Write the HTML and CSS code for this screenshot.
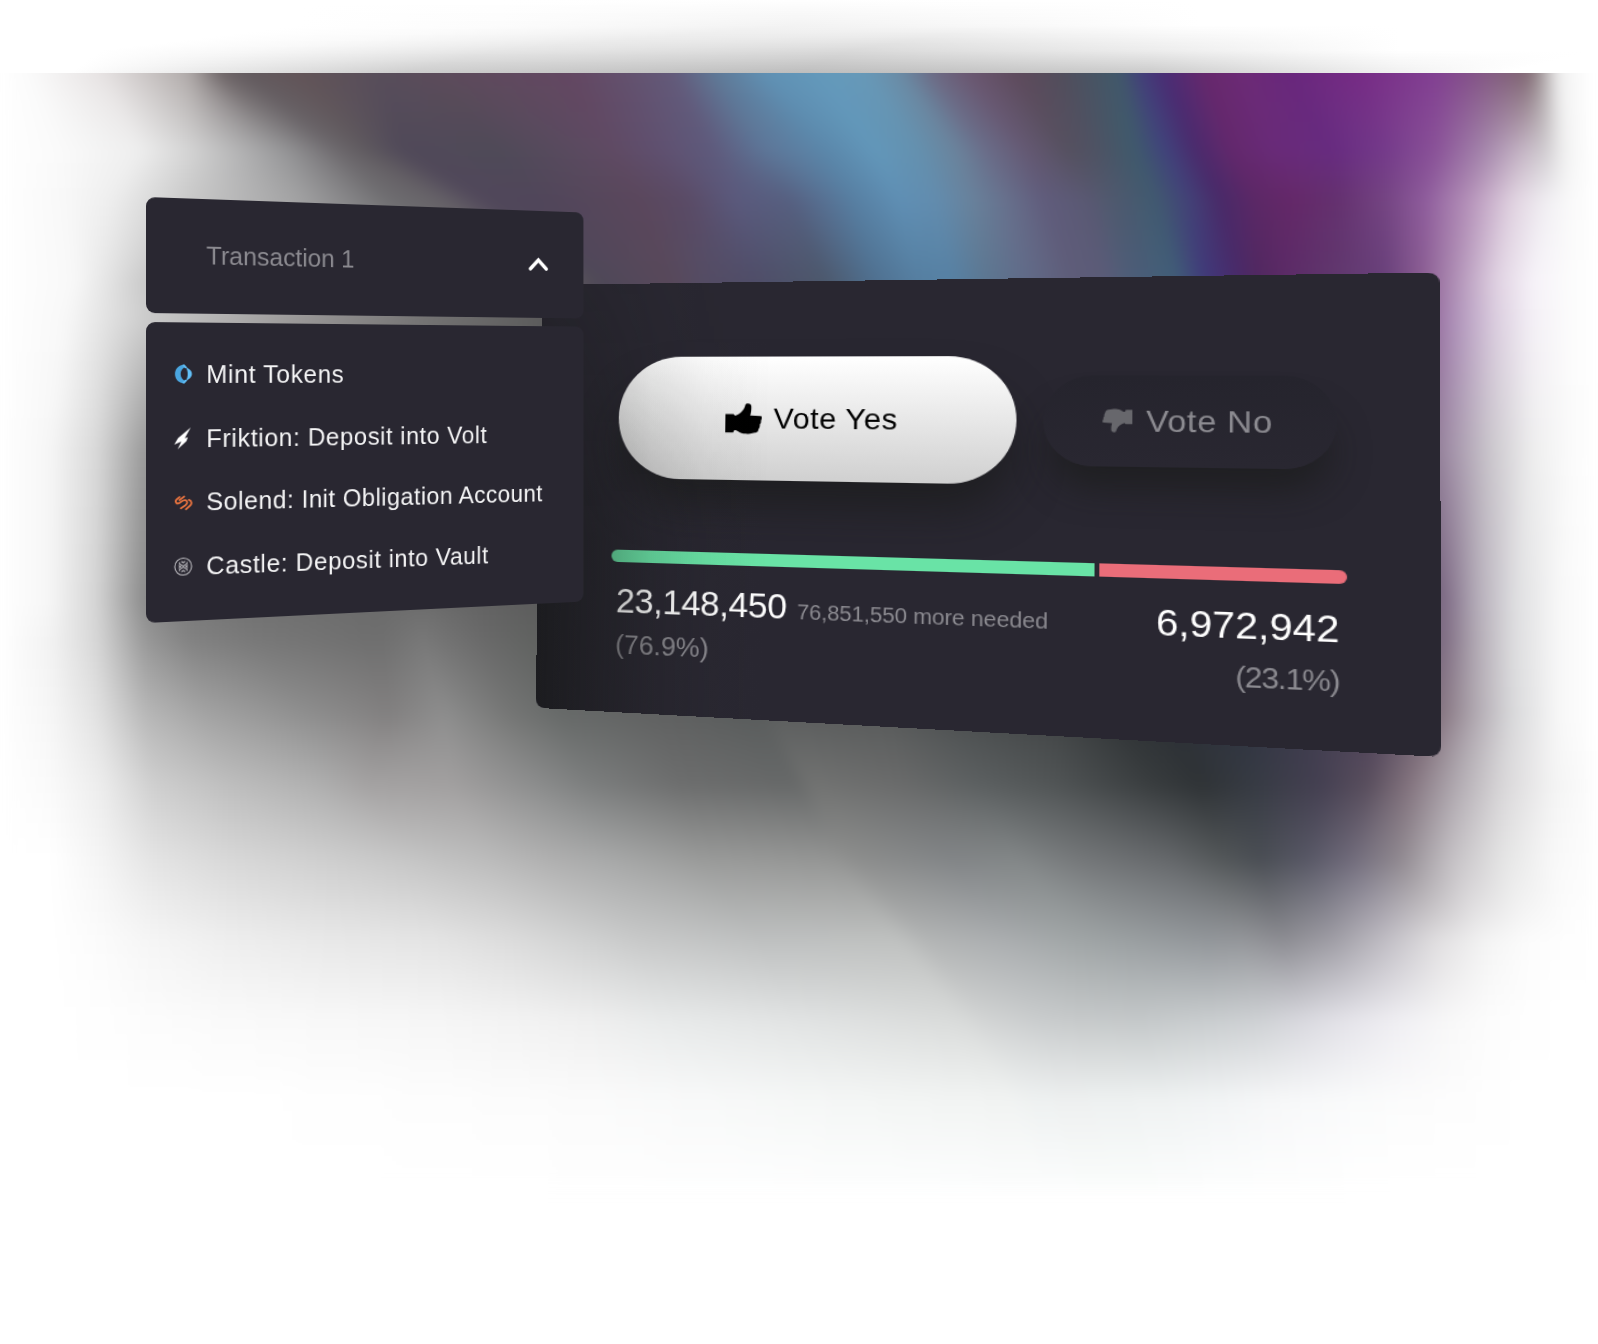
FILE: index.html
```html
<!DOCTYPE html>
<html lang="en">
<head>
<meta charset="utf-8">
<title>Proposal vote</title>
<link rel="stylesheet" href="styles.css">
</head>
<body>
<main class="scene">
  <div class="halo"><canvas id="halo" width="1598" height="73"></canvas></div>
  <div class="glow"><canvas id="glow" width="1598" height="1311"></canvas></div>

  <section class="vote-card">
    <div class="buttons">
      <button class="vote vote-yes">
        <svg class="thumb" viewBox="0 0 110 95"><path d="M0 33H24L29 38C41 34 56 22 59 6C60-2 75-2 77 8C78 20 76 30 74 37L104 39C111 39 111 47 107 50L106 60L103 64C104 74 100 76 99 80C98 88 94 89 88 90C70 95 50 95 38 86C34 83 29 81 26 84L24 90H0Z"/></svg>
        <span>Vote Yes</span>
      </button>
      <button class="vote vote-no">
        <svg class="thumb" viewBox="0 0 110 95"><path d="M0 33H24L29 38C41 34 56 22 59 6C60-2 75-2 77 8C78 20 76 30 74 37L104 39C111 39 111 47 107 50L106 60L103 64C104 74 100 76 99 80C98 88 94 89 88 90C70 95 50 95 38 86C34 83 29 81 26 84L24 90H0Z"/></svg>
        <span>Vote No</span>
      </button>
    </div>
    <div class="bar">
      <div class="bar-yes"></div>
      <div class="bar-no"></div>
    </div>
    <div class="totals">
      <div class="total">
        <div class="count"><span class="num num-yes">23,148,450</span><span class="needed">76,851,550 more needed</span></div>
        <div class="share">(76.9%)</div>
      </div>
      <div class="total total-no">
        <div class="count"><span class="num">6,972,942</span></div>
        <div class="share share-no">(23.1%)</div>
      </div>
    </div>
  </section>

  <section class="tx-panel">
    <header class="tx-head">
      <span class="tx-title">Transaction 1</span>
      <svg class="chevron" viewBox="0 0 23 15"><path d="M2.2 12.8 11.5 3.4 20.8 12.8"/></svg>
    </header>
    <ul class="tx-list">
      <li>
        <svg class="icon" viewBox="0 0 20 22">
          <path fill="#4aa6e0" d="M8.500 1.500C4 2.500 1.200 6.500 1.200 11S4 19.500 8.500 20.500L11 21 12.600 18.600C9 17 7.200 14.500 7.200 11S9 5 12.600 3.400L11 1Z"/>
          <path fill="#62c0f8" d="M13 4.500C16.500 5 19.300 8 19.300 11S16.500 17 13 17.500C14.300 15.500 14.800 13.300 14.800 11S14.300 6.500 13 4.500Z"/>
          <path fill="#62c0f8" d="M9 1.300 11.300 1 14.500 4.500 12 5Z M9 20.700 11.300 21 14.500 17.500 12 17Z"/>
        </svg>
        <span>Mint Tokens</span>
      </li>
      <li>
        <svg class="icon icon-tall" viewBox="0 0 20 24"><path fill="#fff" d="M18 .5 4.500 11.500.4 18.200 8 15.200 4 23.200 13.400 14.800 15 10.800 11.600 11.800Z"/></svg>
        <span>Friktion: Deposit into Volt</span>
      </li>
      <li class="long">
        <svg class="icon" viewBox="0 0 20 20"><g fill="none" stroke="#e8733f" stroke-width="2" stroke-linecap="round"><path d="M6 3.600 3 6C.5 8.500 3.300 11.600 6.200 9.700C9 8 10.500 6 13 7.300C15.200 8.800 14 11 12 12.600L7.500 15.600"/><path d="M11 3.200 6 6.800"/><path d="M16 6.800C19.300 8 19.500 11 17.300 13L13 16.600"/></g></svg>
        <span>Solend: Init Obligation Account</span>
      </li>
      <li>
        <svg class="icon" viewBox="0 0 20 20"><g fill="none" stroke="#c9c8cc" stroke-width="1.100"><circle cx="10" cy="10" r="9"/><path d="M6 5.200V7L10 9.300 14 7V5.200M6 14.800V13L10 10.700 14 13V14.800M8 4.500 10 6 12 4.500M8 15.500 10 14 12 15.500M5 8.500 7.400 10 5 11.500M15 8.500 12.600 10 15 11.500"/></g></svg>
        <span>Castle: Deposit into Vault</span>
      </li>
    </ul>
  </section>
</main>
<script src="glow.js"></script>
</body>
</html>
```
FILE: styles.css
```css
* { box-sizing: border-box; }

body {
  margin: 0;
  background: #fff;
  font-family: "Liberation Sans", Arial, sans-serif;
}

.scene {
  position: relative;
  width: 1598px;
  height: 1344px;
  overflow: hidden;
}

/* backdrop */
.halo, .glow {
  position: absolute;
  left: 0;
  width: 1598px;
  overflow: hidden;
}
.halo { top: 0; height: 73px; }
.glow { top: 73px; height: 1271px; }
.halo canvas, .glow canvas { display: block; }
.glow canvas { margin-top: -40px; filter: blur(7px); }

/* right card: votes */
.vote-card {
  position: absolute;
  left: 543.2px;
  top: 285px;
  width: 784px;
  height: 419px;
  padding: 71.5px 72px 0;
  border-radius: 9px;
  background: #292731;
  color: #fff;
  transform-origin: 0 0;
  transform: matrix3d(0.99932, -0.01393, 0, -0.00016119, -0.017492, 0.99937, 0, -0.00002295, 0, 0, 1, 0, 0, 0, 0, 1);
}
/* shade thrown by the transaction panel */
.vote-card::after {
  content: "";
  position: absolute;
  inset: 0;
  border-radius: 9px;
  background: linear-gradient(90deg, rgba(16, 18, 16, .55), rgba(16, 18, 16, .36) 50px, rgba(16, 18, 16, .15) 110px, rgba(16, 18, 16, .05) 160px, rgba(16, 18, 16, 0) 220px);
  -webkit-mask-image: linear-gradient(180deg, rgba(0, 0, 0, .35), #000 60%);
  mask-image: linear-gradient(180deg, rgba(0, 0, 0, .35), #000 60%);
}

.buttons {
  display: flex;
  align-items: center;
  gap: 22.7px;
  padding-left: 5.3px;
}
.vote {
  display: flex;
  align-items: center;
  justify-content: center;
  border: 0;
  padding: 2px 0 0;
  font: 28px/1 "Liberation Sans", Arial, sans-serif;
}
.vote-yes {
  width: 364px;
  height: 119.5px;
  gap: 11px;
  padding-right: 3px;
  border-radius: 60px;
  background: linear-gradient(180deg, #fff, #d0d0d0);
  box-shadow: 0 28px 40px -4px rgba(22, 23, 20, .55);
  color: #000;
  letter-spacing: .5px;
}
.vote-no {
  width: 240px;
  height: 83px;
  gap: 11px;
  border-radius: 42px;
  background: linear-gradient(180deg, #25242d, #292731);
  box-shadow: 0 26px 30px -6px rgba(24, 25, 22, .55);
  color: #8c8b91;
  letter-spacing: .5px;
}
.thumb { width: 34.5px; height: 30px; fill: #000; }
.vote-no .thumb { width: 25px; height: 22px; fill: #67676c; transform: rotate(180deg); margin-top: -3px; }

.bar {
  display: flex;
  gap: 3.5px;
  height: 12px;
  margin-top: 69.5px;
}
.bar-yes { width: 436px; background: #69e3a6; border-radius: 6px 0 0 6px; }
.bar-no { flex: 1; background: #ea6d79; border-radius: 0 6px 6px 0; }

.totals {
  display: flex;
  justify-content: space-between;
  padding: 17px 6px 0 5px;
}
.total-no { padding-top: 2px; text-align: right; }
.count { display: flex; align-items: baseline; gap: 9.5px; line-height: 42px; }
.total-no .count { justify-content: flex-end; }
.num { font-size: 33px; }
.num-yes { letter-spacing: -.4px; }
.needed { font-size: 20px; letter-spacing: -.1px; color: #8b8a90; }
.share { font-size: 25.5px; line-height: 34px; color: #8b8a90; }
.share-no { padding-top: 7px; letter-spacing: -1px; }

/* left panel: transaction */
.tx-panel {
  position: absolute;
  left: 145.5px;
  top: 197px;
  width: 479px;
  height: 425.5px;
  display: flex;
  flex-direction: column;
  gap: 9px;
  transform-origin: 0 0;
  transform: matrix3d(1, 0.03543, 0, 0.0001983, 0, 1, 0, 0, 0, 0, 1, 0, 0, 0, 0, 1);
}
.tx-head {
  display: flex;
  align-items: center;
  justify-content: space-between;
  height: 116px;
  padding: 0 42.5px 2px 61px;
  border-radius: 9px;
  background: #292731;
}
.tx-title { font-size: 26px; letter-spacing: 0; color: #8b8a90; }
.chevron { width: 23px; height: 15px; fill: none; stroke: #fff; stroke-width: 4; stroke-linecap: round; }
.tx-list {
  flex: 1;
  margin: 0;
  padding: 20px 0 0 27.5px;
  list-style: none;
  border-radius: 9px;
  background: #292731;
  color: #f4f4f5;
}
.tx-list li {
  display: flex;
  align-items: center;
  gap: 14.5px;
  height: 64.7px;
  font-size: 26px;
  letter-spacing: .65px;
}
.tx-list .long { letter-spacing: .5px; }
.icon { width: 19px; height: 22px; }
.icon-tall { height: 24px; }
```
FILE: glow.js
```js
// Soft backdrop: every row lists colour stops (x, colour) at one height.
// Stops with the same index form a streak that runs from row to row.
const HALO = [
  [0, "0 fff 300 fff 500 ffffff 798 fefefe 1000 ffffff 1200 fff 1400 fff 1598 fff"],
  [25, "0 fff 300 fff 500 fcfcfc 798 f3f3f3 1000 f8f8f8 1200 fff 1400 fff 1598 fff"],
  [50, "0 fff 100 fff 250 f8f8f8 500 e6e6e6 850 dadada 1150 ececec 1400 fff 1598 fff"],
  [73, "0 fff 70 fff 200 e8e8e8 400 cccccc 798 bcbcbc 1150 cacaca 1400 f0f0f0 1500 fff"]
];
const TOP = [
  [73, "0 fff 31 fafafa 102 e6e2e2 189 b0aaa9 219 6f6668 245 625a5e 300 625458 383 574d5a 434 5c4b5a 571 634762 628 63516e 673 635a7a 714 5f7896 765 6091b4 823 6399bb 864 6799b8 900 6a8ba5 931 6c6c86 966 6b5872 1017 5e4a5c 1058 524d5b 1119 40596a 1140 42407a 1165 4a2c74 1206 67286c 1245 6c2a76 1290 68277c 1360 762b85 1436 824092 1487 845a84 1528 806872 1541 a39a9c 1558 f0f0f0 1590 fff"],
  [150, "0 fff 60 fafafa 140 eeeeee 190 d4d4d4 290 929294 335 6e6a6e 365 5f5a5f 400 504959 500 4f4a58 612 5f4a63 653 5f4f6e 714 5e5a7c 765 5d7698 829 5b88ab 875 6297ba 920 6490ae 956 6a839c 987 6a6c88 1028 645872 1068 55505f 1094 4f5263 1135 3f5a6c 1165 40437c 1196 4a2a6c 1232 63286c 1272 682a78 1334 672b80 1385 743a8a 1436 8a5298 1485 a587ac 1522 c4b4c4 1545 cfcbcf 1565 f2f2f2 1592 fff"],
  [200, "0 fff 65 f8f8f8 110 eeeeee 190 c8c8c8 300 a2a2a3 390 6e6d70 440 666268 485 50475a 540 50465a 640 5a475c 689 5a4b66 735 5a597c 790 565f80 854 577fa2 900 5f8fb4 936 628cae 971 68829c 1007 67708c 1043 605c7c 1089 595872 1109 50596e 1155 405a70 1188 424278 1221 492968 1257 5c2866 1293 642868 1339 64316f 1385 744482 1425 8e5c9c 1470 b693ba 1513 e0d2e0 1546 f0eef2 1572 fafafa 1598 fff"],
  [280, "0 fff 75 f8f8f8 105 e6e6e6 146 c8c8c8 250 aaaaaa 500 6a6a6c 575 5b5659 600 4e4858 640 54485a 670 58485a 704 544c64 755 4f4d68 825 4c586c 875 4f7090 915 557ea0 951 5681a4 987 5c7690 1028 616a88 1074 5e5c78 1104 5b5c78 1130 4d5d78 1176 405e78 1206 40387a 1237 482a6a 1257 50285f 1283 5a2a66 1339 60386e 1385 68407a 1425 8d6094 1456 b090b6 1497 e0d2e2 1533 f6f2f8 1572 fcfcfc 1598 fff"],
  [318, "0 fff 65 f8f8f8 100 e6e6e6 146 cccccc 300 9a9898 420 757474 540 5c5c5c 600 4e4858 640 54485a 670 58485a 704 544c64 755 4f4d68 825 4c586c 875 4f7090 915 557ea0 951 5681a4 987 5c7690 1028 616a88 1074 5e5c78 1104 5b5c78 1130 4d5d78 1176 405e78 1206 40387a 1237 482a6a 1257 50285f 1283 5a2a66 1339 60386e 1385 68407a 1425 8d6094 1452 ab8db6 1497 dccfe0 1533 f4f0f6 1572 fcfcfc 1598 fff"],
  [450, "0 fff 50 f6f6f6 97 d8d8d8 146 989898 300 707070 420 656565 540 5c5c5c 600 4e4858 640 54485a 670 58485a 704 544c64 755 4f4d68 825 4c586c 875 4f7090 915 557ea0 951 5681a4 987 5c7690 1028 616a88 1074 5e5c78 1104 5b5c78 1130 4d5d78 1176 405e78 1206 40387a 1237 482a6a 1257 50285f 1283 5a2a66 1339 60386e 1385 68407a 1425 85708a 1448 a08ea6 1490 cac6cc 1533 eeeeee 1572 fbfbfb 1598 fff"],
  [600, "0 fff 50 f6f6f6 97 d4d4d4 145 8a8a8a 300 707070 420 656565 540 5c5c5c 600 4e4858 640 54485a 670 58485a 704 544c64 755 4f4d68 825 4c586c 875 4f7090 915 557ea0 951 5681a4 987 5c7690 1028 616a88 1074 5e5c78 1104 5b5c78 1130 4d5d78 1176 405e78 1206 40387a 1237 482a6a 1257 50285f 1283 5a2a66 1339 60386e 1385 68407a 1425 685870 1445 7f6c86 1477 b4acb8 1515 dedee0 1560 f8f8f8 1598 fff"]
];
const BOTTOM = [
  [600, "0 fff 50 f6f6f6 97 d4d4d4 145 8a8a8a 189 787878 255 707070 378 6a6a6a 423 6c6c6c 485 626262 536 5c5c5c 663 606161 765 585b5b 780 585b5b 900 585a5a 1000 4c4f50 1100 404344 1140 2e3238 1180 30343c 1290 353545 1330 44404f 1380 55465a 1445 7f6c86 1477 b4acb8 1515 dedee0 1560 f8f8f8 1598 fff"],
  [640, "0 fff 51 f2f2f2 97 d6d6d6 145 989898 189 828282 255 787878 378 6e6e6e 423 787878 485 696969 536 606260 663 606161 765 585b5b 780 585b5b 900 585a5a 1000 4c4f50 1100 404344 1140 2e3238 1180 30343c 1290 353545 1330 44404f 1380 55465a 1445 806e84 1477 b2aab4 1513 dcdcde 1560 f8f8f8 1598 fff"],
  [715, "0 fff 51 f6f6f6 97 e2e2e2 145 b8b8b8 204 a4a4a4 306 8f8f8f 388 828080 444 8e8e8e 510 757675 561 676a69 663 606161 755 595c5c 775 5d5f5f 890 585a5a 960 4c4f50 1060 404344 1120 303436 1170 2c3036 1240 2e3340 1300 3c3b4c 1375 50425a 1440 857480 1475 b0a8b0 1512 d8d8da 1560 f8f8f8 1598 fff"],
  [785, "0 fff 51 fafafa 102 ececec 153 cfcfcf 230 bebebe 316 b0b0b0 367 a4a2a2 450 a2a0a0 536 8c8d8d 587 7d7f7f 679 6d6e6e 795 666868 813 727372 900 6a6b6b 977 5c6061 1053 515556 1155 383c3e 1201 2f3336 1257 373b44 1323 454052 1369 5a4f5e 1410 84747f 1456 b0a9b0 1502 d8d6d8 1553 f3f3f3 1598 fefefe"],
  [860, "0 fff 51 ffffff 102 f4f4f4 153 e4e4e4 230 d8d8d8 332 cecece 408 c6c6c6 485 bcbcbc 551 b0b0b0 602 a9aaaa 700 9a9b9a 833 949594 856 8d8e8d 951 828587 1020 838788 1079 75787a 1170 65686b 1220 54585a 1260 4a4e54 1308 585866 1349 6f6a7a 1400 908990 1451 c4c0c4 1502 e4e4e4 1553 f8f8f8 1598 fefefe"],
  [940, "0 fff 51 ffffff 102 fbfbfb 153 f5f5f5 230 eeeeee 332 e8e8e8 434 e4e4e4 510 dcdcdc 587 d0d1d1 638 c8c9c9 760 bec0c0 900 bfc1c0 926 b3b5b5 1002 abaeb0 1079 a0a5a6 1130 9a9fa1 1206 92969a 1245 94969a 1283 8c8c92 1334 a09ea6 1385 c0bdc4 1436 e0dee0 1487 f4f4f4 1530 fcfcfc 1570 fefefe 1598 fff"],
  [1020, "0 fff 51 ffffff 102 fefefe 153 fcfcfc 230 fafafa 332 f8f8f8 434 f6f6f6 510 f3f3f3 587 efefef 663 e8eaea 800 e1e3e3 958 d9dbda 985 d2d4d4 1040 c9cccd 1080 c6c9ca 1140 c4c8c9 1210 c9cdcf 1260 ced1d4 1300 d8d8de 1350 e5e4ea 1400 f0eff3 1450 f8f8f8 1490 fcfcfc 1530 fefefe 1570 fff 1598 fff"],
  [1100, "0 fff 51 fff 102 fff 153 fff 230 fff 332 fefefe 434 fdfdfd 510 fcfcfc 587 fbfbfb 700 f8f9f9 850 f4f6f5 1010 f1f3f2 1035 eef1f1 1070 eef0f0 1110 eef1f1 1160 eff2f2 1220 f2f4f5 1270 f6f7f8 1310 f8f9fa 1360 fafbfb 1410 fcfcfc 1460 fdfdfd 1490 fefefe 1530 fff 1570 fff 1598 fff"],
  [1190, "0 fff 51 fff 102 fff 153 fff 230 fff 332 fff 434 fff 510 fff 587 fefefe 700 fefefe 850 fdfefe 1030 fcfdfd 1060 fcfdfd 1100 fbfdfc 1140 fbfdfc 1180 fcfdfd 1230 fdfefe 1280 fefefe 1320 fefefe 1370 fff 1410 fff 1460 fff 1490 fff 1530 fff 1570 fff 1598 fff"]
];

function parse(text) {
  const parts = text.split(" ");
  const stops = [];
  for (let i = 0; i < parts.length; i += 2) {
    let hex = parts[i + 1];
    if (hex.length === 3) hex = hex.replace(/./g, "$&$&");
    stops.push([+parts[i], parseInt(hex.slice(0, 2), 16), parseInt(hex.slice(2, 4), 16), parseInt(hex.slice(4), 16)]);
  }
  return stops;
}

function paint(id, rows, offset) {
  const canvas = document.getElementById(id);
  const ctx = canvas.getContext("2d");
  const keys = rows.map(([y, text]) => [y, parse(text)]);
  for (let k = 0; k < keys.length - 1; k++) {
    const [y0, a] = keys[k];
    const [y1, b] = keys[k + 1];
    const from = k === 0 && y0 === 73 ? offset : y0;
    for (let y = from; y < y1; y++) {
      const t = Math.max(0, (y - y0) / (y1 - y0));
      const gradient = ctx.createLinearGradient(0, 0, 1598, 0);
      a.forEach((stop, i) => {
        const v = stop.map((n, j) => n + (b[i][j] - n) * t);
        gradient.addColorStop(Math.min(1, v[0] / 1598), `rgb(${v[1]} ${v[2]} ${v[3]})`);
      });
      ctx.fillStyle = gradient;
      ctx.fillRect(0, y - offset, 1598, 1);
    }
  }
}

paint("halo", HALO, 0);
paint("glow", TOP, 33);
paint("glow", BOTTOM, 33);
```
